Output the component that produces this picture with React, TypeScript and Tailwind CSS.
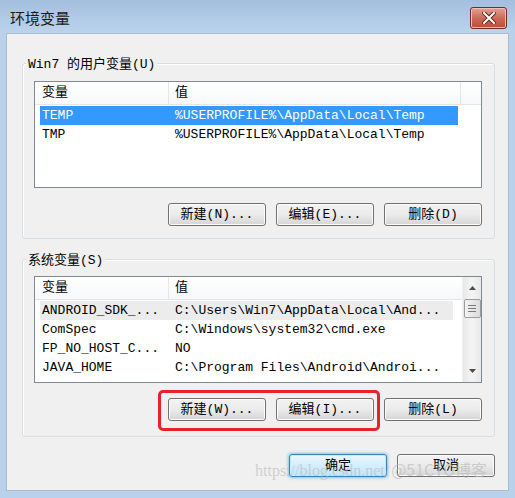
import React from "react";

const userVars = [
  { name: "TEMP", value: "%USERPROFILE%\\AppData\\Local\\Temp", selected: true },
  { name: "TMP", value: "%USERPROFILE%\\AppData\\Local\\Temp", selected: false },
];

const sysVars = [
  { name: "ANDROID_SDK_...", value: "C:\\Users\\Win7\\AppData\\Local\\And...", selected: true },
  { name: "ComSpec", value: "C:\\Windows\\system32\\cmd.exe", selected: false },
  { name: "FP_NO_HOST_C...", value: "NO", selected: false },
  { name: "JAVA_HOME", value: "C:\\Program Files\\Android\\Androi...", selected: false },
];

const Button = ({ label, primary }: { label: string; primary?: boolean }) => (
  <button
    className={
      primary
        ? "flex h-[23px] w-[98px] items-center justify-center rounded-[3px] border border-[#3c7fb1] bg-gradient-to-b from-[#eaf6fd] to-[#bee6fd] text-[13px] text-black shadow-[0_0_3px_1px_#7ec4ea,inset_0_0_0_1px_#c8ebfb] font-['Liberation_Mono','Noto_Sans_CJK_SC',monospace]"
        : "flex h-[23px] w-[98px] items-center justify-center rounded-[3px] border border-[#707070] bg-gradient-to-b from-[#f2f2f2] via-[#ebebeb] to-[#d5d5d5] text-[13px] text-black shadow-[inset_0_0_0_1px_#fcfcfc] font-['Liberation_Mono','Noto_Sans_CJK_SC',monospace]"
    }
  >
    {label}
  </button>
);

const Header = ({ wide }: { wide?: boolean }) => (
  <div className="flex h-[23px] border-b border-[#e5e5e5] bg-gradient-to-b from-white to-[#f7f8fa] text-[13px] leading-[22px] text-black">
    <div className="w-[134px] border-r border-[#e5e5e5] pl-[7px]">变量</div>
    <div className={wide ? "w-[292px] border-r border-[#e5e5e5] pl-[6px]" : "flex-1 pl-[6px]"}>值</div>
    {wide && <div className="flex-1" />}
  </div>
);

const Rows = ({
  items,
  selClass,
}: {
  items: { name: string; value: string; selected: boolean }[];
  selClass: string;
}) => (
  <div className="pl-[5px] pt-px">
    {items.map((r) => (
      <div
        key={r.name}
        className={
          "flex h-[19px] items-center text-[13px] leading-[19px] " +
          (r.selected ? selClass : "text-black")
        }
      >
        <div className="w-[128px] overflow-hidden whitespace-nowrap pl-[2px]">{r.name}</div>
        <div className="whitespace-nowrap pl-[7px]">{r.value}</div>
      </div>
    ))}
  </div>
);

const Scrollbar = () => (
  <div className="flex w-[19px] flex-col items-center border-l border-[#f0f0f0] bg-gradient-to-r from-[#e8e8e8] via-[#f4f4f4] to-[#e8e8e8]">
    <div className="flex h-[22px] w-full items-center justify-center">
      <svg width="7" height="4" viewBox="0 0 7 4">
        <path d="M0 4 L3.5 0 L7 4 Z" fill="#4d4d4d" />
      </svg>
    </div>
    <div className="flex h-[19px] w-[17px] flex-col items-center justify-center gap-[2px] rounded-[2px] border border-[#9c9c9c] bg-gradient-to-r from-[#f3f3f3] to-[#dcdcdc]">
      <div className="h-px w-[8px] bg-[#7a7a7a]" />
      <div className="h-px w-[8px] bg-[#7a7a7a]" />
      <div className="h-px w-[8px] bg-[#7a7a7a]" />
    </div>
    <div className="flex-1" />
    <div className="flex h-[22px] w-full items-center justify-center">
      <svg width="7" height="4" viewBox="0 0 7 4">
        <path d="M0 0 L3.5 4 L7 0 Z" fill="#4d4d4d" />
      </svg>
    </div>
  </div>
);

export default function App() {
  return (
    <div className="relative h-[498px] w-[515px] overflow-hidden bg-[#b9d1ea] font-['Liberation_Mono','Noto_Sans_CJK_SC',monospace]">
      {/* title bar */}
      <div className="flex h-[33px] items-center bg-gradient-to-b from-[#a3bfdf] to-[#bcd3eb] pl-[10px] pr-[8px] pt-[3px]">
        <span className="text-[15px] text-[#1a1a1a] font-['Noto_Sans_CJK_SC',sans-serif]">环境变量</span>
        <div className="ml-auto flex h-[22px] w-[37px] items-center justify-center rounded-[3px] border border-[#6d2d2d] bg-gradient-to-b from-[#e6a196] via-[#cc6a5a] to-[#c04a36] shadow-[inset_0_0_0_1px_#eec1b6]">
          <svg width="14" height="12" viewBox="0 0 14 12">
            <path d="M2 1 L12 11 M12 1 L2 11" stroke="#5a2a22" strokeWidth="4" strokeLinecap="square" />
            <path d="M2 1 L12 11 M12 1 L2 11" stroke="#ffffff" strokeWidth="2" strokeLinecap="square" />
          </svg>
        </div>
      </div>

      {/* client area */}
      <div className="mx-[6px] h-[458px] border border-[#a9bdd2] bg-[#f0f0f0]">
        {/* user variables */}
        <div className="relative ml-[15px] mr-[13px] mt-[29px] h-[176px] rounded-[3px] border border-[#d5dfe5] shadow-[inset_1px_1px_0_#ffffff]">
          <span className="absolute -top-[8px] left-[3px] bg-[#f0f0f0] px-[2px] text-[13px] leading-[18px] text-black">
            Win7 的用户变量(U)
          </span>
          <div className="ml-[11px] mt-[17px] h-[107px] w-[448px] overflow-hidden border border-[#828790] bg-white">
            <Header wide />
            <Rows items={userVars} selClass="w-[418px] bg-[#3399ff] text-white" />
          </div>
          <div className="mt-[15px] flex justify-end gap-[10px] pr-[12px]">
            <Button label="新建(N)..." />
            <Button label="编辑(E)..." />
            <Button label="删除(D)" />
          </div>
        </div>

        {/* system variables */}
        <div className="relative ml-[15px] mr-[13px] mt-[20px] h-[178px] rounded-[3px] border border-[#d5dfe5] shadow-[inset_1px_1px_0_#ffffff]">
          <span className="absolute -top-[8px] left-[3px] bg-[#f0f0f0] px-[2px] text-[13px] leading-[18px] text-black">
            系统变量(S)
          </span>
          <div className="ml-[11px] mt-[16px] flex h-[107px] w-[448px] overflow-hidden border border-[#828790] bg-white">
            <div className="flex-1 overflow-hidden">
              <Header />
              <Rows items={sysVars} selClass="w-[413px] bg-[#ececec] text-black" />
            </div>
            <Scrollbar />
          </div>
          <div className="mt-[15px] flex justify-end gap-[10px] pr-[12px]">
            <Button label="新建(W)..." />
            <Button label="编辑(I)..." />
            <Button label="删除(L)" />
          </div>
        </div>

        <div className="mt-[17px] flex justify-end gap-[10px] pr-[13px]">
          <Button label="确定" primary />
          <Button label="取消" />
        </div>
      </div>

      {/* red highlight annotation */}
      <div className="pointer-events-none absolute left-[158px] top-[390px] h-[41px] w-[222px] rounded-[5px] border-[3px] border-[#e8222a]" />

      {/* watermark */}
      <div className="pointer-events-none absolute left-[255px] top-[457px] flex items-baseline whitespace-nowrap text-[#b8b8b8]/60">
        <span className="text-[16px] font-['Liberation_Serif',serif]">https://blog.csdn.net/</span>
        <span className="ml-[2px] text-[16px] font-['Noto_Sans_CJK_SC',sans-serif]">@51CTO博客</span>
      </div>
    </div>
  );
}
